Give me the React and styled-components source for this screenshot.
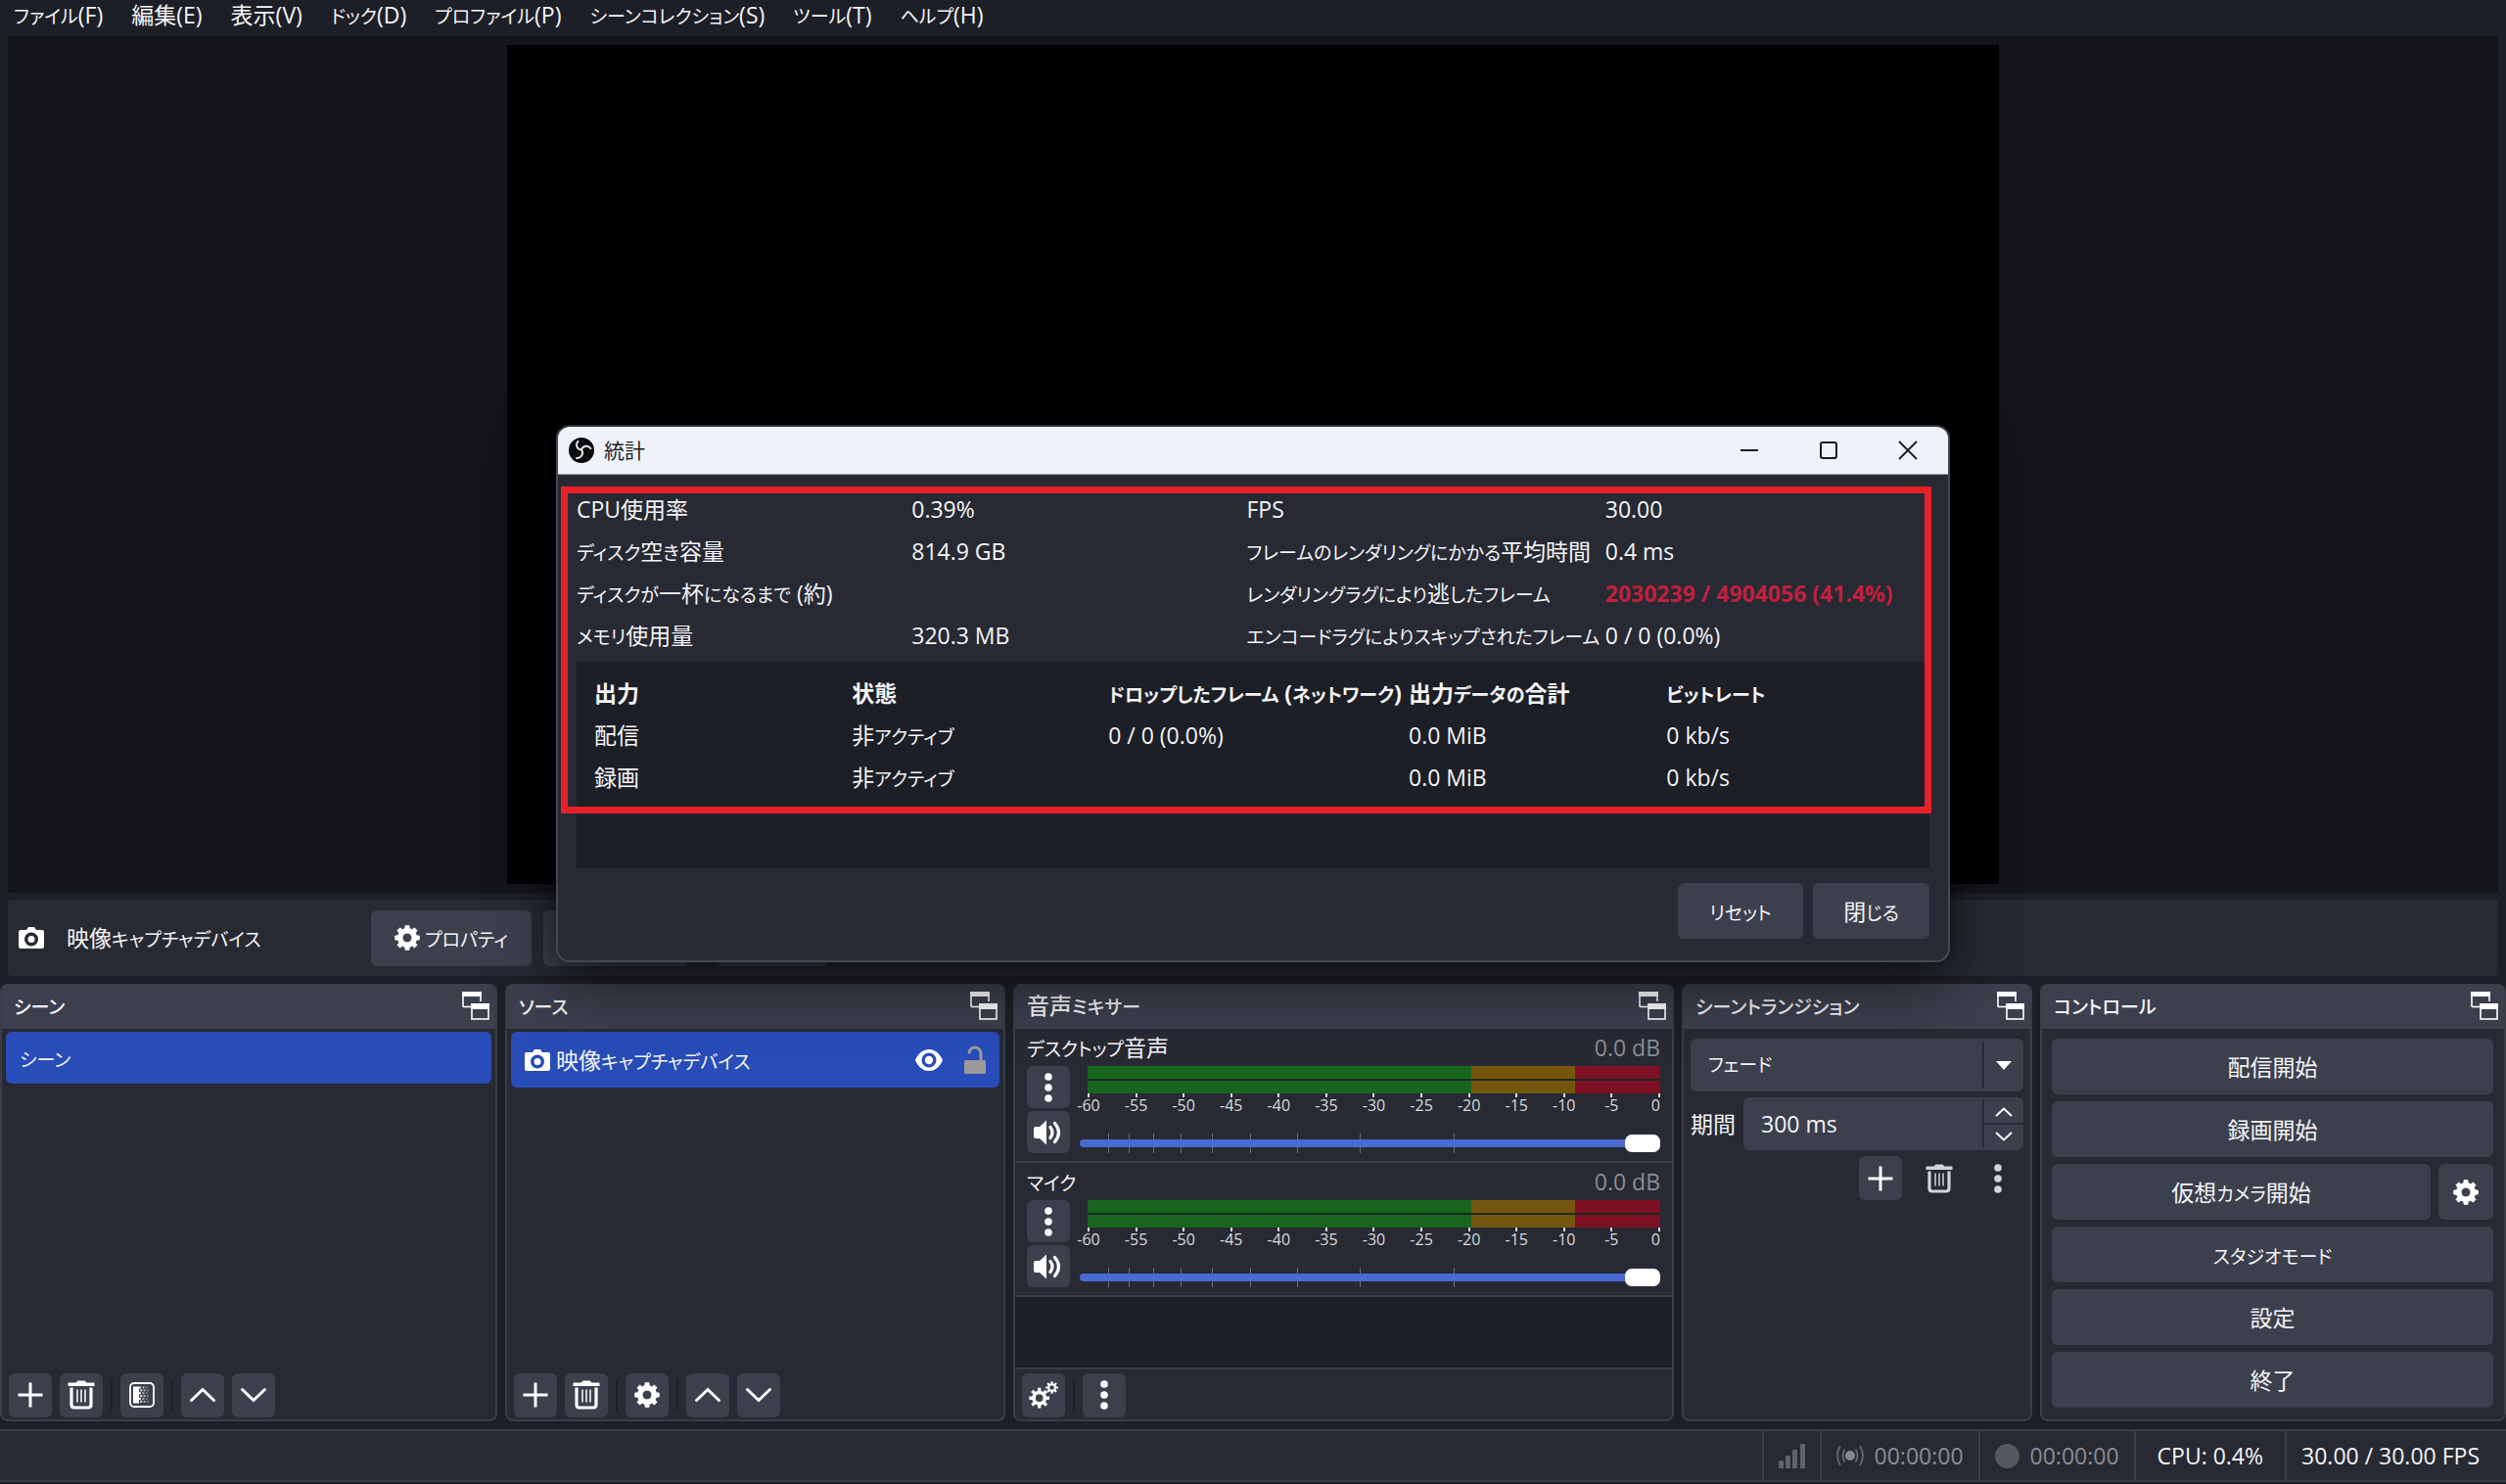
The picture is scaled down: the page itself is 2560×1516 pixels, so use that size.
import React from "react";
import styled, { createGlobalStyle, css } from "styled-components";

const color = {
  base: "#1d1f26",
  panel: "#272a33",
  raised: "#3c404d",
  edge: "#3a3d47",
  preview: "#14151a",
  accent: "#284cb8",
  text: "#f4f4f6",
  muted: "#8b8d94",
};

const size = { text: "23px", kana: "19px", small: "16px" };

const Global = createGlobalStyle`
  * { box-sizing: border-box; }
  body {
    margin: 0;
    background: ${color.base};
    color: ${color.text};
    font-family: "Open Sans", "Noto Sans CJK JP", sans-serif;
    font-size: ${size.text};
    line-height: 32px;
    font-feature-settings: "palt";
  }
  button, input, select {
    font: inherit;
    font-feature-settings: inherit;
    color: inherit;
    border: 0;
    margin: 0;
    padding: 0;
    background: none;
  }
  h2, p, dl, dd, dt { margin: 0; font: inherit; }
  svg { display: block; flex: none; }
`;

const KanaRun = styled.span`
  font-size: ${size.kana};
  line-height: 1;
`;

/* Kana runs are set a step smaller than the kanji and Latin around them. */
const Ja = ({ children }) =>
  children
    .split(/([\u3040-\u30ff]+)/)
    .filter(Boolean)
    .map((part, i) => (/[\u3040-\u30ff]/.test(part) ? <KanaRun key={i}>{part}</KanaRun> : part));

/* ---------- icons ---------- */

const Svg = ({ w = 28, h = w, box = "0 0 28 28", children, ...rest }) => (
  <svg width={w} height={h} viewBox={box} aria-hidden="true" {...rest}>
    {children}
  </svg>
);

const PlusIcon = () => (
  <Svg>
    <path d="M14 1.5v25M1.5 14h25" stroke="#fff" strokeWidth="3" fill="none" />
  </Svg>
);
const TrashIcon = ({ tone = "#fff" }) => (
  <Svg w={28} h={30} box="0 0 28 30">
    <path d="M1 2.500h7.500L10.500 .500h7l2 2H27q.500 0 .500.500v3h-27v-3q0-.500.500-.500z" fill={tone} />
    <path d="M4 7.500v17.500q0 3 3 3h14q3 0 3-3v-17.500" fill="none" stroke={tone} strokeWidth="3.200" />
    <path d="M10 9.500v13M14 9.500v13M18 9.500v13" stroke={tone} strokeWidth="1.500" />
  </Svg>
);
const UpIcon = ({ w = 28 }) => (
  <Svg w={w}>
    <path d="M2.500 19.500 14 8.500l11.500 11" fill="none" stroke="#fff" strokeWidth="3" strokeLinecap="round" />
  </Svg>
);
const DownIcon = ({ w = 28 }) => (
  <Svg w={w}>
    <path d="M2.500 8.500 14 19.500l11.500-11" fill="none" stroke="#fff" strokeWidth="3" strokeLinecap="round" />
  </Svg>
);
const DotsIcon = ({ tone = "#fff" }) => (
  <Svg w={8} h={30} box="0 0 8 30">
    <circle cx="4" cy="4" r="3.800" fill={tone} />
    <circle cx="4" cy="15" r="3.800" fill={tone} />
    <circle cx="4" cy="26" r="3.800" fill={tone} />
  </Svg>
);

const gearPath = (cx, cy, teeth, outer, inner, hole) => {
  const step = (Math.PI * 2) / teeth;
  const at = (r, a) => `${(cx + r * Math.sin(a)).toFixed(2)} ${(cy - r * Math.cos(a)).toFixed(2)}`;
  let d = "";
  for (let i = 0; i < teeth; i += 1) {
    const a = i * step;
    d += `${i ? "L" : "M"}${at(inner, a - step * 0.3)}L${at(outer, a - step * 0.2)}L${at(outer, a + step * 0.2)}L${at(inner, a + step * 0.3)}`;
  }
  return `${d}ZM${cx - hole} ${cy}a${hole} ${hole} 0 1 0 ${hole * 2} 0a${hole} ${hole} 0 1 0 ${-hole * 2} 0Z`;
};
const GearIcon = () => (
  <Svg w={26}>
    <path d={gearPath(14, 14, 8, 13.5, 10.5, 5.2)} fill="#fff" fillRule="evenodd" stroke="#fff" strokeWidth="0.8" strokeLinejoin="round" />
  </Svg>
);
const GearsIcon = () => (
  <Svg w={30}>
    <path d={gearPath(10, 17, 8, 9.8, 7, 3.6)} fill="#fff" fillRule="evenodd" />
    <path d={gearPath(22, 7, 8, 6, 4.2, 2.2)} fill="#fff" fillRule="evenodd" />
  </Svg>
);
const CameraIcon = () => (
  <Svg w={26} h={22} box="0 0 26 22">
    <path
      d="M2 3h6l2-3h6l2 3h6q2 0 2 2v15q0 2-2 2H2q-2 0-2-2V5q0-2 2-2zM13 5.500a7 7 0 1 0 0 14a7 7 0 1 0 0-14zM13 9a3.500 3.500 0 1 1 0 7a3.500 3.500 0 1 1 0-7z"
      fill="#fff"
      fillRule="evenodd"
    />
  </Svg>
);
const EyeIcon = () => (
  <Svg w={28} h={22} box="0 0 28 22">
    <path d="M14 0C7 0 2.500 5 0 11c2.500 6 7 11 14 11s11.500-5 14-11C25.500 5 21 0 14 0zm0 3.500a7.500 7.500 0 1 1 0 15a7.500 7.500 0 1 1 0-15z" fill="#fff" fillRule="evenodd" />
    <circle cx="14" cy="11" r="4.200" fill="#fff" />
  </Svg>
);
const UnlockIcon = () => (
  <Svg w={22} h={30} box="0 0 22 30">
    <path d="M5 8.500V8a6 6 0 0 1 12 0v8" fill="none" stroke="#9c9a9c" strokeWidth="3" />
    <rect x="0" y="15" width="22" height="14" rx="1.500" fill="#9c9a9c" />
  </Svg>
);
const checks = [0, 1, 2, 3, 4, 5].flatMap((row) => [0, 1, 2].map((column) => [row, column]));
const FilterIcon = () => (
  <Svg>
    <rect x="2" y="2" width="24" height="24" rx="4" fill="none" stroke="#fff" strokeWidth="1.800" />
    <rect x="5" y="5.500" width="6" height="17" fill="#fff" />
    {checks.map(([row, column]) => (
      <rect
        key={`${row}-${column}`}
        x={11 + column * 3.4 + (row % 2) * 1.2}
        y={5.5 + row * 2.85}
        width="2"
        height="2"
        fill="#fff"
        opacity={0.9 - column * 0.3}
      />
    ))}
  </Svg>
);
const PopoutIcon = () => (
  <Svg w={28} h={29} box="0 0 28 29">
    <path d="M1 15.500V1h18v9" fill="none" stroke="#fff" strokeWidth="1.600" />
    <path d="M1 15.500h9" stroke="#fff" strokeWidth="1.600" />
    <rect x="0" y="0" width="20" height="5" fill="#fff" />
    <rect x="10" y="13" width="17" height="15" fill="none" stroke="#fff" strokeWidth="1.600" />
    <rect x="9" y="12" width="19" height="6" fill="#fff" />
  </Svg>
);
const SpeakerIcon = () => (
  <Svg w={30} h={26} box="0 0 30 26">
    <path d="M0 9q0-2 2-2h4l7-6.500v25L6 19H2q-2 0-2-2z" fill="#fff" />
    <path d="M17 7.500q4 5.500 0 11M21.500 3.500q8 9.500 0 19" fill="none" stroke="#fff" strokeWidth="3.200" strokeLinecap="round" />
  </Svg>
);
const ObsIcon = () => (
  <Svg w={26} box="0 0 26 26">
    <circle cx="13" cy="13" r="13" fill="#0b0b0d" />
    <g fill="none" stroke="#e4e6ea" strokeWidth="1.900" strokeLinecap="round">
      <path d="M13 12.500C8 12 6.500 7 9.500 3.800" />
      <path d="M13 12.500c1.500-4.500 7-5 9.500-1.200" />
      <path d="M13 12.500c3 4-.500 8.800-5 8.500" />
    </g>
  </Svg>
);
const SignalIcon = () => (
  <Svg w={27} h={25} box="0 0 27 25">
    <path d="M2.500 25v-8M9.500 25V12M16.500 25V6M24.500 25V0" stroke="#5f626b" strokeWidth="5" />
  </Svg>
);
const LiveIcon = () => (
  <Svg w={28} h={24} box="0 0 28 24">
    <circle cx="14" cy="12" r="5" fill="#85878e" />
    <path d="M8.500 5.500q-4 6.500 0 13M19.500 5.500q4 6.500 0 13M4 2q-6 10 0 20M24 2q6 10 0 20" fill="none" stroke="#666972" strokeWidth="1.800" />
  </Svg>
);
const RecIcon = () => (
  <Svg w={25} box="0 0 25 25">
    <circle cx="12.500" cy="12.500" r="12.500" fill="#555861" />
  </Svg>
);

/* ---------- shell ---------- */

const Shell = styled.div`
  position: relative;
  display: flex;
  flex-direction: column;
  height: 100vh;
  min-height: 1020px;
`;
const MenuBar = styled.nav`
  display: flex;
  gap: 29px;
  height: 37px;
  padding: 0 14px;
`;
const MenuButton = styled.button`
  height: 30px;
  line-height: 30px;
  white-space: nowrap;
`;
const Preview = styled.main`
  flex: 1;
  min-height: 0;
  display: flex;
  justify-content: center;
  margin: 0 8px;
  padding: 9px;
  background: ${color.preview};
`;
const Canvas = styled.div`
  height: 100%;
  aspect-ratio: 16 / 9;
  background: #000;
`;
const SourceBar = styled.section`
  display: flex;
  align-items: center;
  gap: 30px;
  height: 78px;
  margin: 7px 8px 8px;
  padding: 0 11px;
  background: ${color.panel};
  border-radius: 4px;
`;
const SourceName = styled.div`
  display: flex;
  align-items: center;
  gap: 23px;
  width: 330px;
`;
const ButtonGroup = styled.div`
  display: flex;
  gap: 12px;
`;

const Button = styled.button`
  display: flex;
  align-items: center;
  justify-content: center;
  gap: 5px;
  height: 57px;
  background: ${color.raised};
  border-radius: 6px;
  white-space: nowrap;
  ${(p) => p.$wide && css`flex: 1;`}
  ${(p) => p.$width && css`width: ${p.$width}px;`}
`;

/* ---------- docks ---------- */

const Docks = styled.div`
  display: grid;
  grid-template-columns: 508fr 511fr 675fr 358fr 476fr;
  gap: 8px;
`;
const DockFrame = styled.section`
  display: flex;
  flex-direction: column;
  min-width: 0;
  min-height: 447px;
  background: ${color.panel};
  border: 2px solid ${color.edge};
  border-top: 0;
  border-radius: 8px;
  overflow: hidden;
`;
const DockHeader = styled.header`
  display: flex;
  align-items: center;
  justify-content: space-between;
  height: 46px;
  padding: 0 6px 2px 12px;
  background: ${color.raised};
  font-weight: 500;
`;
const Dock = ({ title, children }) => (
  <DockFrame>
    <DockHeader>
      <h2>
        <Ja>{title}</Ja>
      </h2>
      <button type="button" aria-label="ポップアウト">
        <PopoutIcon />
      </button>
    </DockHeader>
    {children}
  </DockFrame>
);
const DockList = styled.div`
  flex: 1;
  padding: 3px 4px;
`;
const ListItem = styled.div`
  display: flex;
  align-items: center;
  gap: 6px;
  height: ${(p) => (p.$tall ? 57 : 53)}px;
  padding: 0 14px;
  background: ${color.accent};
  border-radius: 6px;
`;
const ItemName = styled.span`
  flex: 1;
`;
const ItemTools = styled.div`
  display: flex;
  align-items: center;
  gap: 22px;
`;
const DockTools = styled.div`
  display: flex;
  align-items: center;
  gap: 8px;
  height: 53px;
  padding: 3px 7px 0;
  ${(p) => p.$ruled && css`
    padding-top: 1px;
    border-top: 2px solid ${color.edge};
  `}
`;
const ToolButton = styled.button`
  display: flex;
  align-items: center;
  justify-content: center;
  width: 44px;
  height: 45px;
  border-radius: 6px;
  background: ${(p) => (p.$flat ? "transparent" : color.raised)};
`;
const Divider = styled.span`
  width: 2px;
  height: 32px;
  background: ${color.base};
`;

/* ---------- mixer ---------- */

const Channel = styled.div`
  height: 137px;
  padding: 2px 12px 0;
  border-bottom: 2px solid ${color.edge};
`;
const ChannelHead = styled.div`
  display: flex;
  justify-content: space-between;
  height: 36px;
  line-height: 34px;
`;
const Level = styled.span`
  color: ${color.muted};
`;
const ChannelBody = styled.div`
  display: flex;
  gap: 10px;
`;
const ChannelButtons = styled.div`
  display: flex;
  flex-direction: column;
  gap: 3px;
`;
const ChannelButton = styled(ToolButton)`
  height: 43px;
`;
const ChannelMeter = styled.div`
  flex: 1;
`;
const Meter = styled.div`
  display: grid;
  grid-template-columns: 392fr 106fr 87fr;
  grid-template-rows: 13px 13px;
  row-gap: 2px;
  margin-left: 8px;
  background: #1b2a1f;
`;
const Zone = styled.span`
  background: ${(p) => p.$tone};
`;
const Scale = styled.div`
  display: flex;
  justify-content: space-between;
  margin-left: 8px;
  height: 41px;
`;
const Mark = styled.span`
  display: flex;
  flex-direction: column;
  align-items: center;
  width: 2px;
  font-size: ${size.small};
  line-height: 16px;
  color: #d8d9dd;
  &::before {
    content: "";
    flex: none;
    width: 2px;
    height: 4px;
    background: #d8d9dd;
  }
  &:last-child { align-items: flex-end; }
`;
const SliderBox = styled.div`
  position: relative;
  height: 20px;
`;
const SliderTick = styled.i`
  position: absolute;
  top: 0;
  width: 1px;
  height: 20px;
  background: #6b6e78;
`;
const Slider = styled.input`
  position: relative;
  display: block;
  width: 100%;
  height: 20px;
  appearance: none;
  &::-webkit-slider-runnable-track {
    height: 8px;
    border-radius: 4px;
    background: #476bd0;
  }
  &::-webkit-slider-thumb {
    appearance: none;
    width: 36px;
    height: 18px;
    margin-top: -5px;
    border-radius: 7px;
    background: #fff;
  }
`;
const MixerEmpty = styled.div`
  flex: 1;
  background: ${color.base};
`;

const scaleMarks = [-60, -55, -50, -45, -40, -35, -30, -25, -20, -15, -10, -5, 0];
const sliderTicks = [29, 50, 75, 103, 135, 174, 222, 286, 383];
const zones = ["#18651f", "#75560f", "#7d1022"];

const MixerChannel = ({ name }) => (
  <Channel>
    <ChannelHead>
      <span>
        <Ja>{name}</Ja>
      </span>
      <Level>0.0 dB</Level>
    </ChannelHead>
    <ChannelBody>
      <ChannelButtons>
        <ChannelButton type="button" aria-label="メニュー">
          <DotsIcon />
        </ChannelButton>
        <ChannelButton type="button" aria-label="ミュート">
          <SpeakerIcon />
        </ChannelButton>
      </ChannelButtons>
      <ChannelMeter>
        <Meter>
          {[...zones, ...zones].map((tone, i) => (
            <Zone key={i} $tone={tone} />
          ))}
        </Meter>
        <Scale>
          {scaleMarks.map((m) => (
            <Mark key={m}>{m}</Mark>
          ))}
        </Scale>
        <SliderBox>
          {sliderTicks.map((t) => (
            <SliderTick key={t} style={{ left: `${(t / 594) * 100}%` }} />
          ))}
          <Slider type="range" min="0" max="100" defaultValue="100" aria-label={name} />
        </SliderBox>
      </ChannelMeter>
    </ChannelBody>
  </Channel>
);

/* ---------- transitions and controls ---------- */

const TransitionForm = styled.div`
  display: flex;
  flex-direction: column;
  gap: 6px;
  padding: 10px 7px 0;
`;
const Field = styled.div`
  display: flex;
  flex: 1;
  height: 54px;
  min-width: 0;
  background: ${color.raised};
  border-radius: 6px;
`;
const fieldText = css`
  flex: 1;
  min-width: 0;
  height: 54px;
  padding-left: 18px;
  appearance: none;
  outline: 0;
`;
const TransitionSelect = styled.select`
  ${fieldText}
  font-size: ${size.kana};
`;
const DurationInput = styled.input`
  ${fieldText}
`;
const FieldEnd = styled.div`
  display: flex;
  flex-direction: column;
  align-items: center;
  justify-content: center;
  width: 42px;
  margin: 3px 0;
  border-left: 2px solid ${color.panel};
`;
const SelectBox = styled.div`
  display: flex;
`;
const SpinButton = styled.button`
  flex: 1;
  display: flex;
  align-items: center;
  justify-content: center;
  width: 100%;
  & + & { border-top: 2px solid ${color.panel}; }
`;
const DurationRow = styled.div`
  display: flex;
  align-items: center;
  gap: 8px;
`;
const TransitionTools = styled.div`
  display: flex;
  justify-content: flex-end;
  gap: 16px;
  padding-right: 4px;
`;
const ControlList = styled.div`
  display: flex;
  flex-direction: column;
  gap: 7px;
  padding: 10px 11px 12px 10px;
`;
const ControlRow = styled.div`
  display: flex;
  gap: 8px;
`;

/* ---------- status bar ---------- */

const StatusBar = styled.footer`
  display: flex;
  justify-content: flex-end;
  height: 54px;
  margin: 8px 0 2px;
  background: ${color.panel};
  border: solid ${color.edge};
  border-width: 2px 0;
`;
const StatusItem = styled.div`
  display: flex;
  align-items: center;
  gap: 11px;
  padding: 0 15px;
  border-left: 2px solid ${color.edge};
  color: ${(p) => (p.$muted ? color.muted : color.text)};
  white-space: nowrap;
  ${(p) => p.$loose && css`padding: 0 22px;`}
  &:last-child { padding-right: 27px; }
`;

/* ---------- statistics window ---------- */

const Dialog = styled.div`
  position: absolute;
  top: 434px;
  left: 50%;
  width: 1424px;
  transform: translateX(-50%);
  background: ${color.panel};
  border: 2px solid #454851;
  border-top-color: #2c2f36;
  border-radius: 14px;
  box-shadow: 0 24px 64px rgba(0, 0, 0, 0.5), 0 0 24px rgba(0, 0, 0, 0.35);
`;
const TitleBar = styled.header`
  display: flex;
  align-items: center;
  gap: 10px;
  height: 49px;
  padding: 0 6px 0 11px;
  background: #eff3f9;
  border-bottom: 1px solid #9a9da3;
  border-radius: 12px 12px 0 0;
  color: #1b1c20;
  font-size: 21px;
`;
const Title = styled.h2`
  flex: 1;
`;
const WindowButton = styled.button`
  display: flex;
  align-items: center;
  justify-content: center;
  width: 71px;
  height: 48px;
`;
const DialogBody = styled.div`
  padding: 14px 19px 22px;
`;
const StatsGrid = styled.dl`
  display: grid;
  grid-template-columns: minmax(0, 342fr) minmax(0, 342fr) minmax(0, 366fr) minmax(0, 331fr);
  line-height: 43px;
  white-space: nowrap;
`;
const StatValue = styled.dd`
  ${(p) => p.$alert && css`
    color: #c0203e;
    font-weight: 700;
  `}
`;
const OutputPanel = styled.div`
  min-height: 211px;
  margin-top: 5px;
  padding: 11px 0 0 18px;
  background: ${color.base};
`;
const OutputTable = styled.table`
  width: 100%;
  table-layout: fixed;
  border-collapse: collapse;
  line-height: 43px;
  white-space: nowrap;
  th, td { padding: 0; text-align: left; }
  th { font-weight: 700; }
`;
const Col = styled.col`
  width: ${(p) => p.$share}%;
`;
const DialogActions = styled.div`
  display: flex;
  justify-content: flex-end;
  gap: 10px;
  margin-top: 15px;
`;
const Highlight = styled.div`
  position: absolute;
  top: 61px;
  left: 3px;
  right: 17px;
  height: 334px;
  border: 7px solid #e62129;
  pointer-events: none;
`;

const stats = [
  ["CPU使用率", "0.39%"],
  ["FPS", "30.00"],
  ["ディスク空き容量", "814.9 GB"],
  ["フレームのレンダリングにかかる平均時間", "0.4 ms"],
  ["ディスクが一杯になるまで (約)", ""],
  ["レンダリングラグにより逃したフレーム", "2030239 / 4904056 (41.4%)", true],
  ["メモリ使用量", "320.3 MB"],
  ["エンコードラグによりスキップされたフレーム", "0 / 0 (0.0%)"],
];
const outputHead = ["出力", "状態", "ドロップしたフレーム (ネットワーク)", "出力データの合計", "ビットレート"];
const outputRows = [
  ["配信", "非アクティブ", "0 / 0 (0.0%)", "0.0 MiB", "0 kb/s"],
  ["録画", "非アクティブ", "", "0.0 MiB", "0 kb/s"],
];

const StatsDialog = () => (
  <Dialog role="dialog" aria-label="統計">
    <TitleBar>
      <ObsIcon />
      <Title>統計</Title>
      <WindowButton type="button" aria-label="最小化">
        <Svg w={20} box="0 0 20 20">
          <path d="M1 10h18" stroke="#1b1c20" strokeWidth="2" />
        </Svg>
      </WindowButton>
      <WindowButton type="button" aria-label="最大化">
        <Svg w={20} box="0 0 20 20">
          <rect x="2" y="2" width="16" height="16" rx="2" fill="none" stroke="#1b1c20" strokeWidth="2" />
        </Svg>
      </WindowButton>
      <WindowButton type="button" aria-label="ウィンドウを閉じる">
        <Svg w={20} box="0 0 20 20">
          <path d="m1 1 18 18M19 1 1 19" stroke="#1b1c20" strokeWidth="1.800" />
        </Svg>
      </WindowButton>
    </TitleBar>
    <DialogBody>
      <StatsGrid>
        {stats.map(([label, value, alert]) => (
          <React.Fragment key={label}>
            <dt>
              <Ja>{label}</Ja>
            </dt>
            <StatValue $alert={alert}>{value}</StatValue>
          </React.Fragment>
        ))}
      </StatsGrid>
      <OutputPanel>
        <OutputTable>
          <colgroup>
            {[19.3, 19.2, 22.5, 19.3, 19.7].map((share, i) => (
              <Col key={i} $share={share} />
            ))}
          </colgroup>
          <thead>
            <tr>
              {outputHead.map((h) => (
                <th key={h} scope="col">
                  <Ja>{h}</Ja>
                </th>
              ))}
            </tr>
          </thead>
          <tbody>
            {outputRows.map((row) => (
              <tr key={row[0]}>
                {row.map((cell, i) => (
                  <td key={i}>
                    <Ja>{cell}</Ja>
                  </td>
                ))}
              </tr>
            ))}
          </tbody>
        </OutputTable>
      </OutputPanel>
      <DialogActions>
        <Button type="button" $width={128}>
          <span>
            <Ja>リセット</Ja>
          </span>
        </Button>
        <Button type="button" $width={119}>
          <span>
            <Ja>閉じる</Ja>
          </span>
        </Button>
      </DialogActions>
    </DialogBody>
    <Highlight />
  </Dialog>
);

const menus = ["ファイル(F)", "編集(E)", "表示(V)", "ドック(D)", "プロファイル(P)", "シーンコレクション(S)", "ツール(T)", "ヘルプ(H)"];

const ListTools = ({ middle, label }) => (
  <DockTools>
    <ToolButton type="button" aria-label="追加"><PlusIcon /></ToolButton>
    <ToolButton type="button" aria-label="削除"><TrashIcon /></ToolButton>
    <Divider />
    <ToolButton type="button" aria-label={label}>{middle}</ToolButton>
    <Divider />
    <ToolButton type="button" aria-label="上へ"><UpIcon /></ToolButton>
    <ToolButton type="button" aria-label="下へ"><DownIcon /></ToolButton>
  </DockTools>
);

const ControlButton = ({ children }) => (
  <Button type="button" $wide>
    <span>
      <Ja>{children}</Ja>
    </span>
  </Button>
);

export default function App() {
  return (
    <>
      <Global />
      <Shell>
        <MenuBar>
          {menus.map((m) => (
            <MenuButton key={m} type="button">
              <Ja>{m}</Ja>
            </MenuButton>
          ))}
        </MenuBar>
        <Preview>
          <Canvas />
        </Preview>
        <SourceBar>
          <SourceName>
            <CameraIcon />
            <span>
              <Ja>映像キャプチャデバイス</Ja>
            </span>
          </SourceName>
          <ButtonGroup>
            <Button type="button" $width={164}>
              <GearIcon />
              <span>
                <Ja>プロパティ</Ja>
              </span>
            </Button>
            <Button type="button" $width={148} aria-label="フィルタ" />
          </ButtonGroup>
          <Button type="button" $width={112} aria-label="有効化" />
        </SourceBar>
        <Docks>
          <Dock title="シーン">
            <DockList>
              <ListItem>
                <ItemName><Ja>シーン</Ja></ItemName>
              </ListItem>
            </DockList>
            <ListTools middle={<FilterIcon />} label="フィルタ" />
          </Dock>
          <Dock title="ソース">
            <DockList>
              <ListItem $tall>
                <CameraIcon />
                <ItemName><Ja>映像キャプチャデバイス</Ja></ItemName>
                <ItemTools>
                  <button type="button" aria-label="表示"><EyeIcon /></button>
                  <button type="button" aria-label="ロック"><UnlockIcon /></button>
                </ItemTools>
              </ListItem>
            </DockList>
            <ListTools middle={<GearIcon />} label="設定" />
          </Dock>
          <Dock title="音声ミキサー">
            <MixerChannel name="デスクトップ音声" />
            <MixerChannel name="マイク" />
            <MixerEmpty />
            <DockTools $ruled>
              <ToolButton type="button" aria-label="詳細設定"><GearsIcon /></ToolButton>
              <Divider />
              <ToolButton type="button" aria-label="メニュー"><DotsIcon /></ToolButton>
            </DockTools>
          </Dock>
          <Dock title="シーントランジション">
            <TransitionForm>
              <SelectBox>
                <Field>
                  <TransitionSelect aria-label="トランジション">
                    <option>フェード</option>
                  </TransitionSelect>
                  <FieldEnd>
                    <Svg w={16} h={9} box="0 0 16 9">
                      <path d="M0 0h16L8 9z" fill="#fff" />
                    </Svg>
                  </FieldEnd>
                </Field>
              </SelectBox>
              <DurationRow>
                <label htmlFor="duration">期間</label>
                <Field>
                  <DurationInput id="duration" defaultValue="300 ms" />
                  <FieldEnd>
                    <SpinButton type="button" aria-label="増やす"><UpIcon w={18} /></SpinButton>
                    <SpinButton type="button" aria-label="減らす"><DownIcon w={18} /></SpinButton>
                  </FieldEnd>
                </Field>
              </DurationRow>
              <TransitionTools>
                <ToolButton type="button" aria-label="追加"><PlusIcon /></ToolButton>
                <ToolButton type="button" $flat aria-label="削除"><TrashIcon tone="#d3d4da" /></ToolButton>
                <ToolButton type="button" $flat aria-label="メニュー"><DotsIcon tone="#d3d4da" /></ToolButton>
              </TransitionTools>
            </TransitionForm>
          </Dock>
          <Dock title="コントロール">
            <ControlList>
              <ControlRow><ControlButton>配信開始</ControlButton></ControlRow>
              <ControlRow><ControlButton>録画開始</ControlButton></ControlRow>
              <ControlRow>
                <ControlButton>仮想カメラ開始</ControlButton>
                <Button type="button" $width={56} aria-label="仮想カメラ設定"><GearIcon /></Button>
              </ControlRow>
              <ControlRow><ControlButton>スタジオモード</ControlButton></ControlRow>
              <ControlRow><ControlButton>設定</ControlButton></ControlRow>
              <ControlRow><ControlButton>終了</ControlButton></ControlRow>
            </ControlList>
          </Dock>
        </Docks>
        <StatusBar>
          <StatusItem><SignalIcon /></StatusItem>
          <StatusItem $muted><LiveIcon />00:00:00</StatusItem>
          <StatusItem $muted><RecIcon />00:00:00</StatusItem>
          <StatusItem $loose>CPU: 0.4%</StatusItem>
          <StatusItem>30.00 / 30.00 FPS</StatusItem>
        </StatusBar>
        <StatsDialog />
      </Shell>
    </>
  );
}
